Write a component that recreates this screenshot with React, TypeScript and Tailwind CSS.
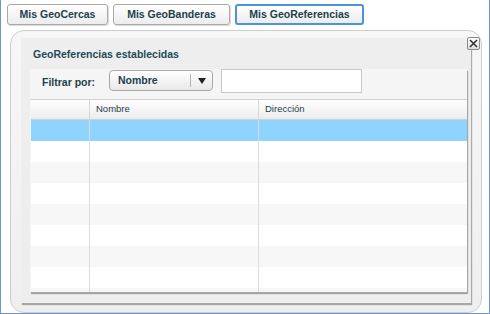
// GeoReferencias panel — tabs, filter bar and an empty grid

const tabs = [
  { label: 'Mis GeoCercas', w: 'w-[101px]', active: false },
  { label: 'Mis GeoBanderas', w: 'w-[117px]', active: false },
  { label: 'Mis GeoReferencias', w: 'w-[129px]', active: true },
];

const rows = Array.from({ length: 9 }, (_, i) => i);

export default function App() {
  return (
    <div className="w-[490px] h-[314px] bg-white border-x border-b border-[#6a97d4] flex flex-col font-['Liberation_Sans',Arial,sans-serif] overflow-hidden">
      {/* Tabs */}
      <div className="flex gap-[5px] pt-[4px] pl-[6px]">
        {tabs.map((t) => (
          <div
            key={t.label}
            className={`${t.w} h-[21px] flex items-center justify-center rounded-[3px] bg-gradient-to-b from-white to-[#ececec] text-[10.5px] font-bold text-[#1e3f4c] ${
              t.active
                ? 'border-2 border-[#4a94dc]'
                : 'border border-[#a9a9a9] shadow-[1px_1px_1px_rgba(0,0,0,0.15)]'
            }`}
          >
            {t.label}
          </div>
        ))}
      </div>

      {/* Frame */}
      <div className="mt-[5px] ml-[9px] mr-[7px] flex-1 min-h-0 rounded-[14px] border border-[#cdcdcd] bg-gradient-to-b from-[#f7f7f7] to-[#efefef] pt-[7px] pl-[10px] pr-[10px] pb-[9px] relative">
        <button className="absolute top-[6px] right-[1px] w-[13px] h-[13px] border border-[#8a8a8a] rounded-[2px] bg-gradient-to-b from-white to-[#dcdcdc] flex items-center justify-center">
          <svg width="9" height="9" viewBox="0 0 9 9">
            <path d="M1 1 L8 8 M8 1 L1 8" stroke="#333" strokeWidth="1.6" />
          </svg>
        </button>

        {/* Mid panel */}
        <div className="h-full bg-[#eeeeee] shadow-[1px_2px_1px_rgba(0,0,0,0.3)] flex flex-col pl-[9px] pr-[4px] pb-[11px]">
          <div className="h-[31px] shrink-0 flex items-center pl-[3px] pt-[2px] text-[10.5px] font-bold text-[#1e4a58]">
            GeoReferencias establecidas
          </div>

          {/* Inner panel */}
          <div className="flex-1 min-h-0 bg-[#f5f5f5] shadow-[1px_2px_1px_rgba(0,0,0,0.3)] flex flex-col">
            <div className="h-[30px] shrink-0 flex items-start pl-[12px]">
              <span className="mt-[6px] text-[10.5px] font-bold text-[#1e3f4c] w-[67px]">Filtrar por:</span>
              <div className="mt-[1px] w-[104px] h-[21px] rounded-[4px] border border-[#a9a9a9] bg-gradient-to-b from-white to-[#e9e9e9] flex items-center">
                <span className="flex-1 pl-[8px] text-[10.5px] font-bold text-[#1e3f4c]">Nombre</span>
                <span className="w-px h-[13px] bg-[#b5b5b5]" />
                <span className="w-[21px] flex justify-center">
                  <svg width="8" height="6" viewBox="0 0 8 6">
                    <path d="M0 0 L8 0 L4 6 Z" fill="#222" />
                  </svg>
                </span>
              </div>
              <div className="ml-[8px] w-[141px] h-[24px] bg-white border border-[#c8c8c8]" />
            </div>

            {/* Grid */}
            <div className="flex-1 min-h-0 bg-white ml-[1px] flex flex-col overflow-hidden">
              <div className="h-[21px] shrink-0 flex border-y border-[#d0d0d0] bg-gradient-to-b from-white to-[#ececec] text-[9.5px] text-[#1e3f4c]">
                <div className="w-[59px] border-r border-[#d8d8d8]" />
                <div className="w-[169px] border-r border-[#d8d8d8] pl-[6px] flex items-center">Nombre</div>
                <div className="flex-1 pl-[6px] flex items-center">Dirección</div>
              </div>
              {rows.map((r) => (
                <div
                  key={r}
                  className={`h-[21px] shrink-0 flex ${
                    r === 0 ? 'bg-[#8fd4fe]' : r % 2 === 0 ? 'bg-[#f7f7f7]' : 'bg-white'
                  }`}
                >
                  <div className="w-[59px] border-r border-[#dcdcdc]" />
                  <div className="w-[169px] border-r border-[#dcdcdc]" />
                  <div className="flex-1" />
                </div>
              ))}
            </div>
          </div>
        </div>
      </div>
    </div>
  );
}
